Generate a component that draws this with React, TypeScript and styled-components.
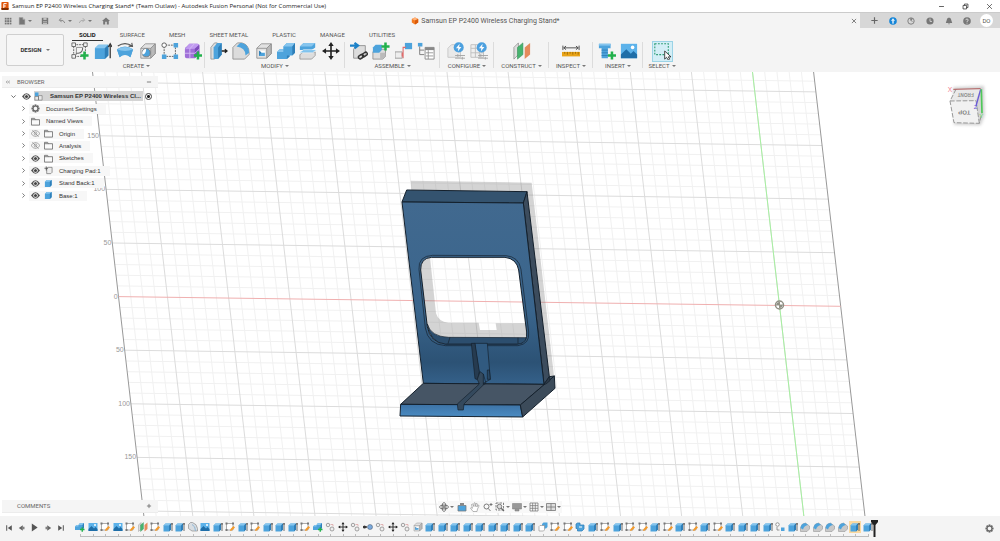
import React from "react";
import styled, { createGlobalStyle } from "styled-components";

const Global = createGlobalStyle`
  *, *::before, *::after { box-sizing: border-box; }
  body { margin: 0; background: #fff; }
  button, input { font: inherit; color: inherit; }
  ul, ol, h1, h2 { margin: 0; padding: 0; list-style: none; font-weight: 400; font-size: inherit; }
`;

const ui = `Roboto, "Liberation Sans", sans-serif`;
const body = `"Liberation Sans", Arial, sans-serif`;

const Page = styled.div`
  min-height: 100vh;
  display: flex;
  flex-direction: column;
  font-family: ${ui};
  font-size: 6px;
  line-height: 8px;
  color: #555;
`;

const IconButton = styled.button<{ $w?: number; $h?: number }>`
  flex: none;
  display: flex;
  align-items: center;
  justify-content: center;
  width: ${(p) => p.$w ?? 12}px;
  height: ${(p) => p.$h ?? 12}px;
  padding: 0;
  border: 0;
  background: none;
`;

/* Window title */
const TitleBar = styled.header`
  display: flex;
  align-items: center;
  height: 12px;
  padding: 0 3px 0 1px;
  gap: 3px;
  background: #fff;
  color: #222;
`;
const WindowTitle = styled.h1`
  flex: 1;
  font-family: "Open Sans", "Noto Sans", sans-serif;
  font-size: 6px;
  white-space: nowrap;
`;
const WindowControls = styled.div`
  display: flex;
  gap: 8px;
`;

/* Document tab strip */
const TabStrip = styled.div`
  display: flex;
  height: 16px;
  border-top: 1px solid #cbcbcb;
  background: #d7d7d7;
`;
const QuickAccess = styled.div`
  display: flex;
  align-items: center;
  width: 118px;
  padding-left: 2px;
`;
const DocTab = styled.div`
  flex: 1;
  display: flex;
  align-items: center;
  background: #f4f4f4;
`;
const DocTitle = styled.h2`
  flex: 1;
  display: flex;
  align-items: center;
  justify-content: center;
  gap: 2px;
  padding-left: 5px;
  font-size: 7px;
  color: #555;
`;
const Account = styled.div`
  display: flex;
  align-items: center;
  justify-content: space-between;
  width: 140px;
  padding: 0 7px 0 8px;
`;
const Avatar = styled.button`
  width: 13px;
  height: 13px;
  padding: 0;
  border: 0;
  border-radius: 50%;
  background: #fff;
  color: #555;
  font-size: 6px;
  line-height: 13px;
`;

/* Ribbon */
const Ribbon = styled.div`
  display: flex;
  height: 44px;
  background: #f4f4f4;
`;
const WorkspaceButton = styled.button`
  display: flex;
  align-items: center;
  justify-content: center;
  gap: 4px;
  width: 58px;
  height: 32px;
  margin: 6px 4px 0 6px;
  padding: 0;
  border: 1px solid #cfcfcf;
  border-radius: 2px;
  background: #f6f6f6;
  color: #333;
  font-weight: 700;
`;
const RibbonMain = styled.div`
  flex: 1;
`;
const RibbonTabs = styled.nav`
  display: flex;
  gap: 10px;
  height: 12px;
  padding: 2px 0 0 4px;
`;
const RibbonTab = styled.button<{ $active?: boolean }>`
  height: 11px;
  padding: 0 7px;
  border: 0;
  border-bottom: 1px solid ${(p) => (p.$active ? "#333" : "transparent")};
  background: none;
  color: ${(p) => (p.$active ? "#222" : "#555")};
  font-weight: ${(p) => (p.$active ? 700 : 400)};
  line-height: 8px;
  white-space: nowrap;
`;
const Groups = styled.div`
  display: flex;
`;
const Group = styled.section<{ $w: number; $pad: number; $last?: boolean }>`
  position: relative;
  width: ${(p) => p.$w}px;
  padding: 0 ${(p) => p.$pad}px;
  &::after {
    content: "";
    position: absolute;
    right: 0;
    top: 2px;
    height: 26px;
    border-right: 1px solid ${(p) => (p.$last ? "transparent" : "#dcdcdc")};
  }
`;
const Tools = styled.div`
  display: flex;
  justify-content: space-around;
  align-items: center;
  height: 22px;
`;
const Tool = styled.button<{ $selected?: boolean; $dim?: boolean }>`
  flex: none;
  display: flex;
  align-items: center;
  justify-content: center;
  width: 21px;
  height: 21px;
  padding: 0;
  border: 1px solid ${(p) => (p.$selected ? "#9bd3e6" : "transparent")};
  background: ${(p) => (p.$selected ? "#d3eef6" : "none")};
  opacity: ${(p) => (p.$dim ? 0.75 : 1)};
`;
const GroupLabel = styled.button`
  display: flex;
  align-items: center;
  justify-content: center;
  gap: 2px;
  width: 100%;
  height: 8px;
  padding: 0;
  border: 0;
  background: none;
  white-space: nowrap;
`;
const Caret = styled.span`
  width: 0;
  height: 0;
  border: 2px solid transparent;
  border-top-color: #777;
  border-bottom: 0;
`;

/* Viewport */
const Viewport = styled.main`
  position: relative;
  flex: 1;
  min-height: 400px;
  display: flex;
  flex-direction: column;
  justify-content: space-between;
  overflow: hidden;
  background: #fff;
`;
const Scene = styled.svg`
  position: absolute;
  inset: 0;
  width: 100%;
  height: 100%;
`;
const Panel = styled.aside`
  position: relative;
  width: 156px;
  margin: 4px 2px 0;
`;
const PanelHead = styled.div`
  display: flex;
  align-items: center;
  height: 12px;
  padding: 0 3px 0 1px;
  background: #f5f5f5;
  border-bottom: 1px solid #ececec;
  color: #666;
`;
const PanelTitle = styled.h2<{ $indent?: number }>`
  flex: 1;
  padding-left: ${(p) => p.$indent ?? 3}px;
`;
const Tree = styled.ul`
  display: grid;
  grid-auto-rows: 1fr;
  height: 112px;
  margin-top: 2px;
  font-family: ${body};
  color: #333;
`;
const TreeRow = styled.li<{ $root?: boolean }>`
  display: flex;
  align-items: center;
  padding-left: ${(p) => (p.$root ? 5 : 15)}px;
`;
const TreeLabel = styled.div<{ $root?: boolean }>`
  display: flex;
  align-items: center;
  height: 10px;
  padding-right: ${(p) => (p.$root ? 2 : 9)}px;
  background: ${(p) => (p.$root ? "#d4d4d4" : "#f7f7f7")};
  font-weight: ${(p) => (p.$root ? 700 : 400)};
  white-space: nowrap;
`;
const TreeName = styled.span<{ $gap: number }>`
  padding-left: ${(p) => p.$gap}px;
`;
const ActiveRadio = styled.input`
  appearance: none;
  width: 7px;
  height: 7px;
  margin: 0 0 0 2px;
  border: 1px solid #444;
  border-radius: 50%;
  background: radial-gradient(circle, #222 0 1px, #fff 2px);
`;
const BottomRow = styled.div`
  position: relative;
  display: grid;
  grid-template-columns: 1fr auto 1fr;
  align-items: center;
  padding: 0 2px 3px;
`;
const Comments = styled(PanelHead)`
  width: 156px;
  height: 13px;
`;
const NavBar = styled.div`
  display: flex;
  align-items: center;
  height: 12px;
  background: #f8f8f8;
`;

/* Timeline */
const Timeline = styled.footer`
  display: flex;
  align-items: flex-start;
  height: 25px;
  padding: 0 5px 0 2px;
  background: #f4f4f4;
`;
const Playback = styled.div`
  display: flex;
  padding-top: 5px;
  margin-right: 7px;
`;
const Track = styled.div`
  position: relative;
  flex: 0 1 800px;
`;
const Features = styled.ol`
  display: flex;
`;
const Feature = styled.li`
  position: relative;
  flex: 1;
  display: flex;
  justify-content: center;
  height: 21px;
  padding-top: 5px;
  &::before {
    content: "";
    position: absolute;
    left: 0;
    right: 0;
    bottom: 0;
    border-bottom: 1px solid #bdbdbd;
  }
  &:first-child::before { left: 50%; }
  &:last-child::before { right: 50%; }
  &::after {
    content: "";
    position: absolute;
    left: 50%;
    bottom: 0;
    height: 3px;
    border-left: 1px solid #bdbdbd;
  }
`;
const FeatureButton = styled(IconButton)<{ $on?: boolean }>`
  background: ${(p) => (p.$on ? "#fbd9a0" : "none")};
`;
const Marker = styled.svg`
  position: absolute;
  right: -4px;
  top: 3px;
`;
const Spacer = styled.div`
  flex: 1;
`;

/* ---- Icons: all drawn on a 20 x 20 field ---- */
const B = "#4da3dc";
const D = "#2f7fb8";
const L = "#86c5ee";
const G = "#777";

const Plus = ({ x = 15, y = 15 }) => (
  <path d={`M${x - 4.5} ${y}h9M${x} ${y - 4.5}v9`} stroke="#22b14c" strokeWidth="2.8" />
);
const Cube = ({ f = B, s = D, t = L }) => (
  <>
    <path d="M2 6 L6 2 H17 V14 L13 18 H2Z" fill={f} />
    <path d="M2 6 L6 2 H17 L13 6Z" fill={t} />
    <path d="M13 6 L17 2 V14 L13 18Z" fill={s} />
  </>
);
const GreyCube = () => (
  <g stroke="#8a8a8a" strokeWidth=".9" strokeLinejoin="round">
    <path d="M2 7 L7 2 H18 V13 L13 18 H2Z" fill="#e2e2e2" />
    <path d="M13 7 L18 2 V13 L13 18Z" fill="#b9b9b9" />
    <path d="M2 7 H13" fill="none" />
  </g>
);
const Bolt = () => (
  <>
    <circle cx="13" cy="6" r="5.6" fill="#1585d8" />
    <path d="M14 2 L10 7 H12.600 L12 10.500 L16 5.500 H13.500Z" fill="#fff" />
  </>
);
const Folder = () => (
  <path d="M1 3h7l1.500 3H19V18H1Z M1 6h9" fill="#fafafa" stroke="#666" strokeWidth="1.800" />
);
const Eye = () => (
  <>
    <path d="M0 10Q10-4 20 10Q10 24 0 10Z" fill="#555" />
    <circle cx="10" cy="10" r="5" fill="#fff" />
    <circle cx="10" cy="10" r="3.400" fill="#444" />
  </>
);
const Move = () => (
  <g stroke="#222" fill="#222">
    <path d="M10 3V17M3 10H17" strokeWidth="1.800" />
    <path d="M10 0l3 4.500H7ZM10 20l3-4.500H7ZM0 10l4.500-3v6ZM20 10l-4.500-3v6Z" stroke="none" />
  </g>
);
const gearTeeth = Array.from({ length: 8 }, (_, i) => i * 45);
const Gear = () => (
  <>
    {gearTeeth.map((a) => (
      <rect key={a} x="8" y="1" width="4" height="4" fill="#666" transform={`rotate(${a} 10 10)`} />
    ))}
    <circle cx="10" cy="10" r="5.500" fill="none" stroke="#666" strokeWidth="2.600" />
  </>
);

const icons: Record<string, React.ReactNode> = {
  logo: (
    <>
      <rect x="1" y="0" width="18" height="20" rx="2" fill="#e0560b" />
      <path d="M7 16V4h7M7 10h5" fill="none" stroke="#fff" strokeWidth="2.500" />
      <path d="M1 15h18v3a2 2 0 0 1-2 2H3a2 2 0 0 1-2-2Z" fill="#7b2a00" />
    </>
  ),
  doc: (
    <>
      <path d="M10 1l8 4v9l-8 5-8-5V5Z" fill="#f47b20" />
      <path d="M10 1l8 4-8 4-8-4Z" fill="#ffb27a" />
      <path d="M10 9l8-4v9l-8 5Z" fill="#d95a0a" />
    </>
  ),
  min: <path d="M3 10H17" stroke="#222" strokeWidth="2" />,
  restore: <path d="M3 7H13V17H3ZM7 7V3H17V13H13" fill="none" stroke="#222" strokeWidth="2" />,
  close: <path d="M3 3L17 17M17 3L3 17" stroke="#222" strokeWidth="1.800" />,
  plus: <path d="M3 10H17M10 3V17" stroke="#666" strokeWidth="2.600" />,
  minus: <path d="M3 10H17" stroke="#555" strokeWidth="2.400" />,
  collapse: <path d="M9 6L4 10L9 14M16 6L11 10L16 14" fill="none" stroke="#666" strokeWidth="2" />,
  grid: (
    <g fill={G}>
      {[2, 8, 14].map((x) => [2, 8, 14].map((y) => <rect key={`${x}-${y}`} x={x} y={y} width="4.500" height="4.500" />))}
    </g>
  ),
  file: <path d="M3 1h9l5 5v13H3ZM12 1v5h5" fill={G} stroke="#999" />,
  save: (
    <>
      <path d="M2 2H18V18H2Z" fill={G} />
      <path d="M6 3h8v4H6ZM5 11h10v2H5ZM5 15h10v2H5Z" fill="#d7d7d7" />
    </>
  ),
  undo: <path d="M17 15Q15 7 5 8M8 3L3 8L9 12" fill="none" stroke="#888" strokeWidth="2.400" />,
  redo: <path d="M3 15Q5 7 15 8M12 3L17 8L11 12" fill="none" stroke="#aaa" strokeWidth="2.400" />,
  home: <path d="M10 1L20 10H17V19H12V12H8V19H3V10H0Z" fill="#777" />,
  update: (
    <>
      <circle cx="10" cy="10" r="9.500" fill="#1585d8" />
      <path d="M10 4l4 5h-3v7H9V9H6Z" fill="#fff" stroke="#fff" />
    </>
  ),
  ext: (
    <>
      <circle cx="10" cy="10" r="8" fill="none" stroke={G} strokeWidth="2.200" />
      <path d="M10 10L14 4H8ZM10 10l6 2" fill={G} stroke={G} />
    </>
  ),
  clock: (
    <>
      <circle cx="10" cy="10" r="9" fill={G} />
      <path d="M10 4v7h5" fill="none" stroke="#d7d7d7" strokeWidth="2.200" />
    </>
  ),
  bell: <path d="M10 1Q16 2 16 9L18 15H2L4 9Q4 2 10 1ZM7 16h6l-3 3Z" fill={G} />,
  help: (
    <>
      <circle cx="10" cy="10" r="9.500" fill={G} />
      <path d="M7 8q0-3 3-3t3 3q0 2-3 3v2M10 14.500v2" fill="none" stroke="#e8e8e8" strokeWidth="2" />
    </>
  ),
  sketchNew: (
    <>
      <path d="M3 3H16V16H3Z" fill="none" stroke="#666" strokeWidth="1.100" strokeDasharray="2 1" />
      <path d="M6 14V12.500H8Q13 12 13 6" fill="none" stroke="#666" strokeWidth="1.200" />
      <path d="M6 6H13M6 6V13" fill="none" stroke="#888" />
      <path d="M1 1h4v4H1ZM14 1h4v4h-4ZM1 14h4v4H1Z" fill="#f4f4f4" stroke="#555" strokeWidth=".9" />
      <Plus />
    </>
  ),
  extrude: (
    <>
      <g transform="translate(-1 1)"><Cube /></g>
      <path d="M18 18V4M16 5.500L18 2l2 3.500" fill="none" stroke="#333" strokeWidth="1.400" />
    </>
  ),
  revolve: (
    <>
      <path d="M1 8L4 17Q10 12 16 17L19 8Q10 15 1 8Z" fill={B} />
      <path d="M1 8Q10 2 19 8L16 17Q10 11 4 17Z" fill={B} />
      <path d="M1 8Q10 3 19 8Q10 12 1 8Z" fill={L} />
      <path d="M2 4.500Q10-1 18 4.500M17.500 1l.8 4-4.300-.4" fill="none" stroke="#555" strokeWidth="1.200" />
    </>
  ),
  hole: (
    <>
      <GreyCube />
      <circle cx="8" cy="12" r="4.500" fill={B} stroke="#777" />
      <path d="M8 7.500a4.500 4.500 0 0 0-4 6.500Q8 13 8 7.500Z" fill="#fff" />
    </>
  ),
  pattern: (
    <>
      <path d="M5 3.500H15M3.500 5V15M16 6V14M6 16H14" stroke="#555" strokeDasharray="2 1" />
      <circle cx="3.500" cy="3.500" r="2.500" fill="#fff" stroke="#555" />
      <path d="M14 1h5v5h-5ZM1 14h5v5H1ZM14 14h5v5h-5Z" fill={B} />
    </>
  ),
  form: (
    <>
      <path d="M1 8Q1 6 3 5L6 2H15Q17 2 17 4V13L12 18H3Q1 18 1 16Z" fill="#a070d8" />
      <path d="M1 8L6 2H15L17 3L12 7.500Z" fill="#c09af0" />
      <path d="M12 7.500L17 3V13L12 18Z" fill="#7d4bbb" />
      <path d="M1 12.500H12L17 8M6.500 18V7.500L11.500 2" fill="none" stroke="#d6bdf5" />
      <Plus x={15.5} y={15} />
    </>
  ),
  pressPull: (
    <>
      <path d="M1 6L5 1H8V14L5 19H1Z" fill="#ddd" stroke="#888" strokeWidth=".8" />
      <path d="M4 6L8 1H13V14L9 19H4Z" fill={B} />
      <path d="M9 6L13 1V14L9 19Z" fill={D} />
      <path d="M13 10H18M16.500 8L19 10L16.500 12" stroke="#222" strokeWidth="1.400" fill="none" />
    </>
  ),
  fillet: (
    <>
      <path d="M1 6L6 1H11Q19 3 19 12V14L14 19H1Z" fill="#dcdcdc" stroke="#888" strokeWidth=".9" />
      <path d="M5 5L9 1H11Q19 3 19 12L15 15Q15 6 5 5Z" fill={B} />
    </>
  ),
  shell: (
    <>
      <GreyCube />
      <path d="M4.500 9.500H11V15.500H4.500Z" fill="#fff" />
      <path d="M4.500 9.500L7 11.500V15.500H4.500Z" fill={D} />
      <path d="M7 12H11V15.500H4.500Z" fill={B} />
    </>
  ),
  combine: (
    <>
      <path d="M0 11L3 8H7V5L11 1H20V12L17 15H14V16L11 19H0Z" fill={B} />
      <path d="M7 5L11 1H20L17 5ZM0 11L3 8H7V11Z" fill={L} />
      <path d="M17 5L20 1V12L17 15ZM11 15H14V16L11 19Z" fill={D} />
    </>
  ),
  split: (
    <>
      <path d="M1 5L5 1H18V6L14 9H1Z" fill={B} />
      <path d="M1 5L5 1H18L14 5Z" fill={L} />
      <path d="M1 14L5 11H18V15L14 19H1Z" fill="#ddd" stroke="#888" strokeWidth=".8" />
      <path d="M0 12L5 8.500H20L15 12Z" fill="#7fc3ee" stroke="#fff" strokeWidth=".6" />
    </>
  ),
  move: <Move />,
  insertComp: (
    <>
      <path d="M4 8L7 4H17V14L14 18H4Z" fill="#ddd" stroke="#888" strokeWidth=".9" />
      <path d="M0 4H8M5 1L9 4L5 7" fill="none" stroke="#1d82c8" strokeWidth="2.400" />
      <g fill="none" stroke="#333" strokeWidth="1.600">
        <rect x="9" y="14.500" width="6" height="3.600" rx="1.800" transform="rotate(-35 12 16)" />
        <rect x="13.500" y="12" width="6" height="3.600" rx="1.800" transform="rotate(-35 16.500 14)" />
      </g>
    </>
  ),
  newComp: (
    <>
      <path d="M1 11L4 8H15V16L12 19H1Z" fill="#ddd" stroke="#888" strokeWidth=".9" />
      <path d="M1 6L4 3H11V9L8 12H1Z" fill={B} />
      <path d="M9 12H15V16L12 19H9Z" fill="#bbb" />
      <Plus x={15} y={5} />
    </>
  ),
  joint: (
    <>
      <path d="M11 1H19V8H11Z" fill={B} />
      <path d="M0 11H8V18H0Z" fill="#eee" stroke="#999" />
      <path d="M9 18V6H12M8 12V16" stroke="#e06a6a" strokeWidth="1.200" fill="none" />
    </>
  ),
  bom: (
    <>
      <path d="M9 6H19V19H9Z" fill="#fff" stroke="#888" />
      <path d="M9 6H19V9H9Z" fill="#888" />
      <path d="M10 12H18M10 15.500H18M12.500 9V19" stroke="#888" strokeWidth=".9" />
      <path d="M1 1H6V5H1Z" fill={B} />
      <path d="M3 5V14H8M3 9H8" fill="none" stroke="#777" />
    </>
  ),
  config: (
    <>
      <path d="M1 7L5 3H15V17H1Z" fill="#e6e6e6" stroke="#b5b5b5" />
      <path d="M9 15H20M9 18H20M12 13.500V16.500M17 16.500V19.500" stroke="#888" />
      <Bolt />
    </>
  ),
  configTable: (
    <>
      <path d="M1 3H15V17H1Z" fill="#eee" stroke="#aaa" />
      <path d="M1 7H15M1 12H15M6 3V17M10.500 3V17" stroke="#aaa" />
      <path d="M9 15H20M9 18H20M12 13.500V16.500M17 16.500V19.500" stroke="#888" />
      <Bolt />
    </>
  ),
  plane: (
    <>
      <path d="M1 6L6 1V14L1 19Z" fill="#ddd" stroke="#888" strokeWidth=".8" />
      <path d="M5 6L11 1V14L5 19Z" fill="#46b36e" stroke="#2c8a50" strokeWidth=".6" />
      <path d="M13 6L19 1V14L13 19Z" fill="#e58a5c" />
    </>
  ),
  measure: (
    <>
      <path d="M1 4V9M19 4V9M2 6.500H18M4.500 4.500L2 6.500L4.500 8.500M15.500 4.500L18 6.500L15.500 8.500" fill="none" stroke="#444" />
      <path d="M0 11H20V16H0Z" fill="#e8a317" />
      <path d="M3 11v2M6 11v3M9 11v2M12 11v3M15 11v2M18 11v3" stroke="#8a5c00" strokeWidth=".8" />
    </>
  ),
  bolt: (
    <>
      <path d="M1 2H14V7H11V18H4V7H1Z" fill={B} />
      <path d="M1 2H14V4H1Z" fill={L} />
      <path d="M4 9H11M4 12H11M4 15H11" stroke={D} />
      <Plus x={15.5} y={15} />
    </>
  ),
  image: (
    <>
      <path d="M1 2H19V18H1Z" fill="#5cb2ea" />
      <path d="M1 14L7 8L12 13L15 10L19 14V18H1Z" fill="#1f6ea8" />
      <circle cx="14" cy="6" r="2" fill="#fff" />
    </>
  ),
  select: (
    <>
      <path d="M2 2H17V14H2Z" fill="none" stroke="#2c9a72" strokeWidth="1.200" strokeDasharray="2 1.500" />
      <path d="M13 10V19L15 17L17 20L18.500 19L17 16.500H20Z" fill="#fff" stroke="#222" strokeWidth=".9" />
    </>
  ),
  sketch: (
    <>
      <path d="M3 3H16V16H3Z" fill="#fff" stroke="#777" strokeWidth="1.200" />
      <path d="M1 1h4v4H1ZM14 1h4v4h-4ZM1 14h4v4H1Z" fill="#777" />
      <path d="M10 18L11 14L17 8L20 11L14 17Z" fill="#f39a2c" />
    </>
  ),
  compAdd: (
    <>
      <path d="M0 9L3 6H7L10 2H18V12L14 16H0Z" fill={B} />
      <path d="M7 6L10 2H18L15 6ZM0 9L3 6H7V9Z" fill={L} />
      <path d="M15 6L18 2V12L15 15Z" fill={D} />
      <Plus x={14.5} y={15} />
    </>
  ),
  chamfer: (
    <>
      <path d="M1 12Q2 3 11 2L19 8V14L14 19H1Z" fill="#c9c9c9" stroke="#888" />
      <path d="M1 12Q2 3 11 2L16 6Q8 7 6 15Z" fill={B} />
    </>
  ),
  shellGrey: (
    <>
      <path d="M1 5L5 1H9Q18 4 19 13V18H8L1 13Z" fill="#d8dde2" stroke="#888" strokeWidth="1.300" />
      <path d="M8 5Q15 8 15 18" fill="none" stroke="#8fb6d4" strokeWidth="2" />
    </>
  ),
  jointGrey: (
    <g fill="#eee" stroke="#888" strokeWidth="1.500">
      <circle cx="6" cy="6" r="3.500" />
      <circle cx="14" cy="14" r="4" />
      <path d="M11 5h5v4" fill="none" stroke="#d9a0a0" />
    </g>
  ),
  mate: (
    <>
      <path d="M0 10H8" stroke="#333" strokeWidth="3" />
      <circle cx="3" cy="10" r="3" fill="#333" />
      <circle cx="14" cy="10" r="5" fill="#7aa9dd" stroke="#456" />
    </>
  ),
  array: (
    <>
      <circle cx="5" cy="5" r="3.500" fill="#fff" stroke="#777" strokeWidth="1.500" />
      <path d="M4 10v6h5" fill="none" stroke="#777" strokeWidth="1.500" />
      <path d="M12 11h7v7h-7Z" fill={B} />
    </>
  ),
  boxes: (
    <>
      <path d="M8 4L11 1H19V10L16 13H8Z" fill={B} />
      <path d="M2 9L4 7H13V16L11 18H2Z" fill="#fff" stroke="#888" strokeWidth="1.200" />
    </>
  ),
  merge: (
    <>
      <path d="M2 4L5 2H10V6H18V14L14 18H5V13H2Z" fill={B} stroke={D} strokeWidth="1.500" />
      <path d="M8 10h6" stroke="#fff" strokeWidth="2" />
    </>
  ),
  gear: <Gear />,
  folder: <Folder />,
  eye: <Eye />,
  eyeOff: (
    <g fill="none" stroke="#888" strokeWidth="1.600">
      <path d="M0 10Q10-3 20 10Q10 23 0 10Z" />
      <circle cx="10" cy="10" r="3" />
      <path d="M3 3L17 17" />
    </g>
  ),
  root: (
    <>
      <path d="M2 1H10V10H2Z" fill={B} />
      <path d="M2 10H10V18H2ZM10 8H18V18H10Z" fill="#e8e8e8" stroke="#666" strokeWidth="1.200" />
    </>
  ),
  linked: (
    <>
      <path d="M6 6L9 3H18V14L15 17H6Z" fill="#eee" stroke="#555" strokeWidth="1.300" />
      <path d="M5 1V10M1 5H9" stroke="#333" strokeWidth="1.500" />
    </>
  ),
  cube: <Cube />,
  open: <path d="M4 7L10 13L16 7" fill="none" stroke="#333" strokeWidth="2" />,
  closed: <path d="M7 4L13 10L7 16" fill="none" stroke="#444" strokeWidth="2" />,
  first: <path d="M3 3V17H5.500V3ZM17 3V17L7 10Z" fill="#555" />,
  prev: <path d="M12 3V17L2 10ZM13 7H16V13H13Z" fill="#666" />,
  play: <path d="M4 1V19L17 10Z" fill="#555" />,
  next: <path d="M8 3V17L18 10ZM4 7H7V13H4Z" fill="#666" />,
  last: <path d="M17 3V17H14.500V3ZM3 3V17L13 10Z" fill="#555" />,
  orbit: (
    <g fill="none" stroke="#555" strokeWidth="1.600">
      <ellipse cx="10" cy="10" rx="9" ry="4" />
      <ellipse cx="10" cy="10" rx="4" ry="9" />
      <path d="M10 7v6M7 10h6" />
    </g>
  ),
  look: (
    <>
      <path d="M2 7H18V18H2Z" fill={B} stroke="#777" strokeWidth="1.500" />
      <path d="M6 2H14V6H6Z" fill="#888" />
    </>
  ),
  pan: (
    <path
      d="M6 19L1 12Q2 10 5 12.500L3 5Q4.500 3 6 5L7.500 9L8 2Q9.500 0 10.500 2V9L12.500 3Q14 2 15 4L13.500 10L16.500 6Q18.500 6 18 8L15 14L14 19Z"
      fill="#fff"
      stroke="#888"
      strokeWidth="1.200"
      strokeLinejoin="round"
    />
  ),
  zoom: (
    <g fill="none" stroke="#666" strokeWidth="1.700">
      <circle cx="7" cy="9" r="5" />
      <path d="M10.500 13L15 18M16 2V8M13 5H19" />
    </g>
  ),
  fit: (
    <g fill="none" stroke="#666" strokeWidth="1.600">
      <path d="M2 2H17V16H2Z" strokeDasharray="5 2" />
      <circle cx="9" cy="9" r="4.500" fill="#ddd" />
      <path d="M12.500 12.500L18 18" strokeWidth="2.400" />
    </g>
  ),
  display: <path d="M1 3H19V14H1ZM6 15H14V18H6Z" fill="#999" stroke="#777" />,
  gridView: <path d="M2 2H18V18H2ZM2 7.300H18M2 12.600H18M7.300 2V18M12.600 2V18" fill="none" stroke="#777" strokeWidth="1.500" />,
  views: <path d="M1 3H19V17H1ZM10 3V17M1 10H19" fill="#ddd" stroke="#777" strokeWidth="1.600" />,
};

const Icon = ({ name, size = 10 }: { name: string; size?: number }) => (
  <svg width={size} height={size} viewBox="0 0 20 20" aria-hidden="true">
    {icons[name]}
  </svg>
);

const groups: { label: string; w: number; pad: number; tools: string[] }[] = [
  { label: "CREATE", w: 137, pad: 1, tools: ["sketchNew", "extrude", "revolve", "hole", "pattern", "form"] },
  { label: "MODIFY", w: 140, pad: 3, tools: ["pressPull", "fillet", "shell", "combine", "split", "move"] },
  { label: "ASSEMBLE", w: 95, pad: 3, tools: ["insertComp", "newComp", "joint", "bom"] },
  { label: "CONFIGURE", w: 54, pad: 4, tools: ["config", "configTable"] },
  { label: "CONSTRUCT", w: 55, pad: 4, tools: ["plane"] },
  { label: "INSPECT", w: 44, pad: 4, tools: ["measure"] },
  { label: "INSERT", w: 50, pad: 3, tools: ["bolt", "image"] },
  { label: "SELECT", w: 38, pad: 4, tools: ["select"] },
];

const tree: { name: string; eye?: "eye" | "eyeOff"; icon: string }[] = [
  { name: "Document Settings", icon: "gear" },
  { name: "Named Views", icon: "folder" },
  { name: "Origin", eye: "eyeOff", icon: "folder" },
  { name: "Analysis", eye: "eyeOff", icon: "folder" },
  { name: "Sketches", eye: "eye", icon: "folder" },
  { name: "Charging Pad:1", eye: "eye", icon: "linked" },
  { name: "Stand Back:1", eye: "eye", icon: "cube" },
  { name: "Base:1", eye: "eye", icon: "cube" },
];

const featureCodes =
  "nisispseefiesesee" + "esnj" + "mgkjmgh" + "eeeeeeeee" + "bssc" + "esessese" + "seseeee" + "aerrrrEe";
const featureIcons: Record<string, string> = {
  n: "compAdd", i: "image", s: "sketch", p: "plane", e: "extrude", E: "extrude", f: "shellGrey", j: "jointGrey",
  m: "move", g: "jointGrey", k: "mate", h: "shell", b: "boxes", c: "merge", a: "array", r: "chamfer",
};

/* Ground plane: i counts major cells along X, j along Y */
const at = (i: number, j: number) => [779.5 + 61.2 * i + 6.2 * j, 305.5 + 0.82 * i + 53.6 * j];
const seg = (i1: number, j1: number, i2: number, j2: number) => {
  const [x1, y1] = at(i1, j1);
  const [x2, y2] = at(i2, j2);
  return `M${x1.toFixed(1)} ${y1.toFixed(1)}L${x2.toFixed(1)} ${y2.toFixed(1)}`;
};
const range = (a: number, b: number) => Array.from({ length: b - a + 1 }, (_, k) => a + k);
const minor =
  range(-53, 4).filter((n) => n % 5 !== 0).map((n) => seg(n / 5, -5, n / 5, 5)).join("") +
  range(-25, 25).filter((n) => n % 5 !== 0).map((n) => seg(-10.8, n / 5, 1, n / 5)).join("");
const major =
  range(-10, 0).map((n) => seg(n, -5, n, 5)).join("") +
  range(-4, 4).filter((n) => n !== 0).map((n) => seg(-10.8, n, 1, n)).join("");

const GroundPlane = () => (
  <g fill="none">
    <path d={minor} stroke="#f1f1f1" />
    <path d={major} stroke="#dcdcdc" />
    <path d={seg(-10.8, -5, -10.8, 5) + seg(1, -5, 1, 5)} stroke="#999" />
    <path d={seg(-10.8, 0, 1, 0)} stroke="#f0b0b0" />
    <path d={seg(0, -5, 0, 5)} stroke="#a6f0a0" />
    <g fill="#999" fontFamily="Liberation Sans, Arial, sans-serif" fontSize="7" textAnchor="end">
      {range(-3, 3).map((j) => {
        const [x, y] = at(-10.8, j);
        return (
          <text key={j} x={x - 1} y={y + 2}>
            {Math.abs(j) * 50}
          </text>
        );
      })}
    </g>
    <circle cx="779.5" cy="305" r="4" fill="#fff" stroke="#8f8f84" strokeWidth="1.500" />
    <path d="M776 305H783M779.500 301.500V308.500" stroke="#9a9a8f" />
    <path d="M779.500 305V302A3 3 0 0 0 776.500 305ZM779.500 305V308A3 3 0 0 0 782.500 305Z" fill="#8f8f84" />
  </g>
);

const ChargingStand = () => (
  <g transform="translate(380 170) scale(.33333)" stroke="#14202c" strokeWidth="3" strokeLinejoin="round">
    <path
      fillRule="evenodd"
      stroke="none"
      fill="#808080"
      fillOpacity=".34"
      d="M92 32L455 38L522 618L508 640H140ZM150 262H420L440 460H347L350 480H300L296 458H205Q175 455 168 430Z"
    />
    <path d="M80 60L441 65L430 99L66 96Z" fill="#34536f" />
    <path d="M441 65L508 620V640L492 643L430 99Z" fill="#3c4c5d" />
    <path
      fillRule="evenodd"
      fill="url(#back)"
      d="M66 96L430 99L492 643L130 640ZM155 262Q121 264 122 300L142 470Q150 518 196 522H412Q444 518 440 486L416 300Q410 266 375 262Z"
    />
    <path d="M142 462Q152 500 206 502L439 503Q434 522 412 522H196Q150 518 142 462Z" fill="#2c4e6e" strokeWidth="2" />
    <path d="M210 502L204 521M414 503V521" strokeWidth="2" />
    <path
      fill="none"
      strokeWidth="2"
      d="M158 256Q114 258 117 298L136 474Q144 524 196 527H414Q450 522 446 486L423 298Q416 260 378 257Z"
    />
    <path d="M284 520H322L331 628L310 640L297 606Z" fill="#315a80" strokeWidth="2" />
    <path d="M274 520H285L298 605L293 629L285 626Z" fill="#263b50" strokeWidth="2" />
    <path d="M130 640L492 643L508 620L523 618L421 705L62 703Z" fill="#465565" />
    <path d="M62 703L421 705L428 741L60 738Z" fill="url(#foot)" />
    <path d="M421 705L523 618L525 655L428 741Z" fill="#3c4b5a" />
    <path d="M508 620L492 643L498 642L510 632Z" fill="#2c3947" strokeWidth="2" />
    <path d="M322 600V628H331L328 600Z" fill="#2a4966" strokeWidth="2" />
    <path d="M300 605L310 612V645L252 702L250 720H234L232 702L298 642L292 628Z" fill="#34495d" strokeWidth="2" />
    <path d="M310 612L318 640L310 645" fill="none" strokeWidth="2" />
  </g>
);

const ViewCube = () => (
  <g transform="translate(670 0) scale(.33333)" fontFamily="Liberation Sans, Arial, sans-serif" textAnchor="middle">
    <path d="M850 262L942 258L944 345L932 376L852 374Z" fill="#777" opacity=".35" filter="url(#soft)" />
    <path d="M858 268L932 266L918 302L840 303Z" fill="#e9e9e9" />
    <path d="M840 303L918 302L928 370L852 368Z" fill="#f1f1f1" />
    <path d="M932 266L934 345L928 370L918 302Z" fill="#d5d5d5" />
    <path d="M858 268L840 303L852 368L928 370L934 345M840 303L918 302L928 370" fill="none" stroke="#999" strokeWidth="3" strokeDasharray="14 5" />
    <path d="M850 268L932 266" stroke="#b05a5a" strokeWidth="3" />
    <path d="M932 268L918 318" stroke="#6a5ad8" strokeWidth="4" />
    <path d="M934 268L936 340" stroke="#4fc95a" strokeWidth="5" />
    <text x="840" y="277" fontSize="20" fill="#ef7d8b">X</text>
    <text x="917" y="326" fontSize="18" fill="#6a5ad8">Z</text>
    <text x="934" y="354" fontSize="18" fill="#5be05b">Y</text>
    <text fontSize="18" fontWeight="700" fill="#808080" transform="translate(883 331) rotate(181)">TOP</text>
    <text fontSize="14" fontWeight="700" fill="#8c8c8c" transform="translate(887 279) rotate(180)">FRONT</text>
  </g>
);

const nav: [string, string, boolean][] = [
  ["orbit", "Orbit", true],
  ["look", "Look at", false],
  ["pan", "Pan", false],
  ["zoom", "Zoom", false],
  ["fit", "Fit", true],
  ["display", "Display settings", true],
  ["gridView", "Grid and snaps", true],
  ["views", "Viewports", true],
];

export default function App() {
  return (
    <Page>
      <Global />
      <TitleBar>
        <Icon name="logo" size={8} />
        <WindowTitle>
          Samsun EP P2400 Wireless Charging Stand* (Team Outlaw) - Autodesk Fusion Personal (Not for Commercial Use)
        </WindowTitle>
        <WindowControls>
          <IconButton $w={16} aria-label="Minimize"><Icon name="min" size={7} /></IconButton>
          <IconButton $w={16} aria-label="Restore"><Icon name="restore" size={7} /></IconButton>
          <IconButton $w={16} aria-label="Close"><Icon name="close" size={7} /></IconButton>
        </WindowControls>
      </TitleBar>

      <TabStrip>
        <QuickAccess>
          <IconButton aria-label="Show data panel"><Icon name="grid" size={8} /></IconButton>
          <IconButton $w={22} aria-label="File"><Icon name="file" size={8} />&nbsp;<Caret /></IconButton>
          <IconButton $w={18} aria-label="Save"><Icon name="save" size={8} /></IconButton>
          <IconButton $w={22} aria-label="Undo"><Icon name="undo" size={8} />&nbsp;<Caret /></IconButton>
          <IconButton $w={18} aria-label="Redo"><Icon name="redo" size={8} />&nbsp;<Caret /></IconButton>
          <IconButton $w={24} $h={16} aria-label="Home"><Icon name="home" size={8} /></IconButton>
        </QuickAccess>
        <DocTab>
          <DocTitle>
            <Icon name="doc" size={8} />
            Samsun EP P2400 Wireless Charging Stand*
          </DocTitle>
          <IconButton aria-label="Close tab"><Icon name="close" size={6} /></IconButton>
        </DocTab>
        <Account>
          <IconButton aria-label="New design"><Icon name="plus" size={9} /></IconButton>
          <IconButton aria-label="Updates"><Icon name="update" size={8} /></IconButton>
          <IconButton aria-label="Extensions"><Icon name="ext" size={8} /></IconButton>
          <IconButton aria-label="Job status"><Icon name="clock" size={8} /></IconButton>
          <IconButton aria-label="Notifications"><Icon name="bell" size={8} /></IconButton>
          <IconButton aria-label="Help"><Icon name="help" size={8} /></IconButton>
          <Avatar>DO</Avatar>
        </Account>
      </TabStrip>

      <Ribbon>
        <WorkspaceButton>DESIGN <Caret /></WorkspaceButton>
        <RibbonMain>
          <RibbonTabs>
            {["SOLID", "SURFACE", "MESH", "SHEET METAL", "PLASTIC", "MANAGE", "UTILITIES"].map((t) => (
              <RibbonTab key={t} $active={t === "SOLID"}>{t}</RibbonTab>
            ))}
          </RibbonTabs>
          <Groups>
            {groups.map((g) => (
              <Group key={g.label} $w={g.w} $pad={g.pad} $last={g.label === "SELECT"}>
                <Tools>
                  {g.tools.map((t) => (
                    <Tool key={t} aria-label={t} $selected={t === "select"} $dim={g.label === "CONFIGURE"}>
                      <Icon name={t} size={18} />
                    </Tool>
                  ))}
                </Tools>
                <GroupLabel>{g.label} <Caret /></GroupLabel>
              </Group>
            ))}
          </Groups>
        </RibbonMain>
      </Ribbon>

      <Viewport>
        <Scene viewBox="0 72 1000 444" preserveAspectRatio="xMidYMid slice">
          <defs>
            <linearGradient id="back" x1="0" y1="0" x2="0" y2="1">
              <stop offset="0" stopColor="#41698f" />
              <stop offset=".6" stopColor="#3a658c" />
              <stop offset=".88" stopColor="#2c5275" />
              <stop offset="1" stopColor="#35618a" />
            </linearGradient>
            <linearGradient id="foot" x1="0" y1="0" x2="0" y2="1">
              <stop offset="0" stopColor="#3d73a6" />
              <stop offset="1" stopColor="#4a8bc2" />
            </linearGradient>
            <filter id="soft"><feGaussianBlur stdDeviation="5" /></filter>
          </defs>
          <GroundPlane />
          <ChargingStand />
          <ViewCube />
        </Scene>

        <Panel>
          <PanelHead>
            <IconButton $w={10} aria-label="Collapse browser"><Icon name="collapse" size={6} /></IconButton>
            <PanelTitle $indent={4}>BROWSER</PanelTitle>
            <IconButton aria-label="Minimize browser"><Icon name="minus" size={6} /></IconButton>
          </PanelHead>
          <Tree>
            <TreeRow $root>
              <IconButton aria-label="Collapse"><Icon name="open" size={7} /></IconButton>
              <IconButton $w={15} aria-label="Toggle visibility"><Icon name="eye" size={9} /></IconButton>
              <TreeLabel $root>
                <Icon name="root" size={9} />
                <TreeName $gap={7}>Samsun EP P2400 Wireless Cl...</TreeName>
              </TreeLabel>
              <ActiveRadio type="radio" name="active" aria-label="Activate component" defaultChecked />
            </TreeRow>
            {tree.map((n) => (
              <TreeRow key={n.name}>
                <IconButton aria-label={`Expand ${n.name}`}><Icon name="closed" size={7} /></IconButton>
                <TreeLabel>
                  {n.eye && (
                    <IconButton $w={13} aria-label={`Show or hide ${n.name}`}><Icon name={n.eye} size={9} /></IconButton>
                  )}
                  <IconButton $w={13} aria-label={`${n.name} options`}><Icon name={n.icon} size={9} /></IconButton>
                  <TreeName $gap={4}>{n.name}</TreeName>
                </TreeLabel>
              </TreeRow>
            ))}
          </Tree>
        </Panel>

        <BottomRow>
          <Comments>
            <PanelTitle $indent={14}>COMMENTS</PanelTitle>
            <IconButton aria-label="Add comment"><Icon name="plus" size={6} /></IconButton>
          </Comments>
          <NavBar>
            {nav.map(([icon, label, caret]) => (
              <IconButton key={icon} $w={caret ? 17 : 13} aria-label={label}>
                <Icon name={icon} size={10} />
                {caret && <>&nbsp;<Caret /></>}
              </IconButton>
            ))}
          </NavBar>
        </BottomRow>
      </Viewport>

      <Timeline>
        <Playback>
          {["first", "prev", "play", "next", "last"].map((p) => (
            <IconButton key={p} $w={13} $h={13} aria-label={p}><Icon name={p} size={p === "play" ? 9 : 8} /></IconButton>
          ))}
        </Playback>
        <Track>
          <Features>
            {featureCodes.split("").map((c, i) => (
              <Feature key={i}>
                <FeatureButton $on={c === "E"} aria-label={`Feature ${i + 1}`}>
                  <Icon name={featureIcons[c]} size={10} />
                </FeatureButton>
              </Feature>
            ))}
          </Features>
          <Marker width="7" height="18" viewBox="0 0 7 18" aria-hidden="true">
            <path d="M0 1H7V3L4.500 6V18H2.500V6L0 3Z" fill="#222" />
          </Marker>
        </Track>
        <Spacer />
        <IconButton $h={24} aria-label="Timeline settings"><Icon name="gear" size={9} /></IconButton>
      </Timeline>
    </Page>
  );
}
